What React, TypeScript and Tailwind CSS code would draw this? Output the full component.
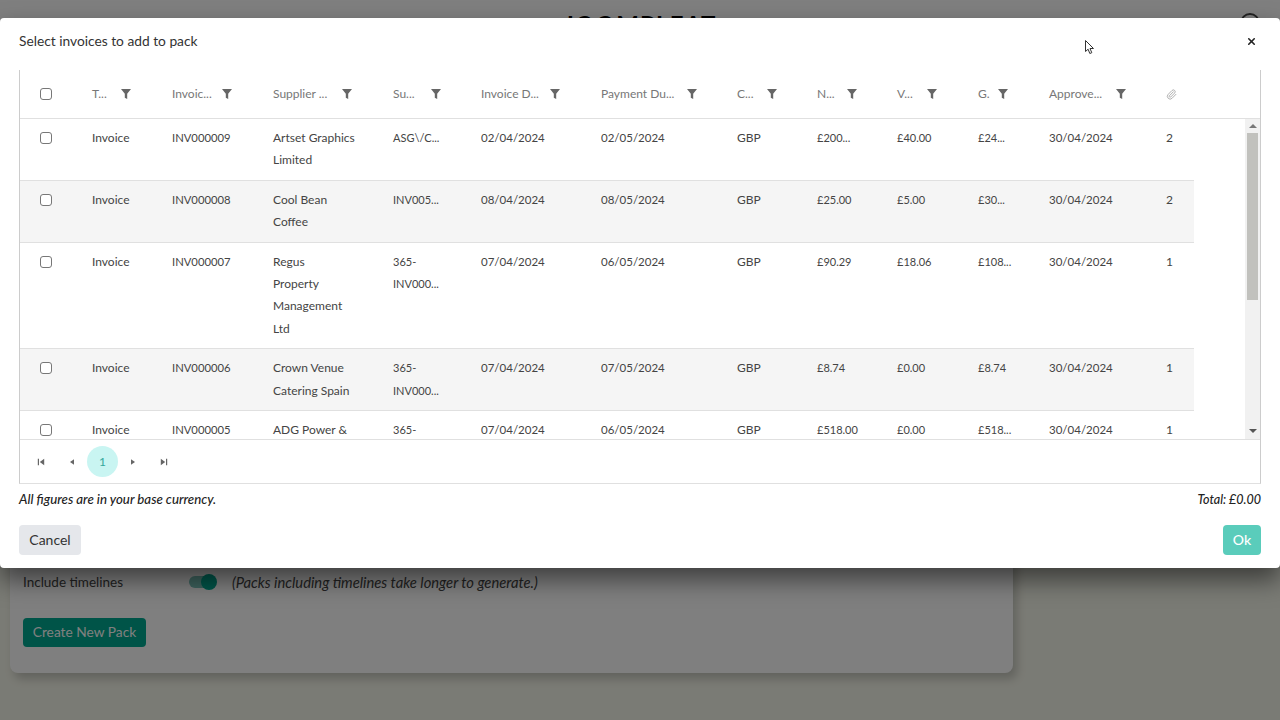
import React from 'react';
import { Paperclip, X } from 'lucide-react';

const columns = 'grid grid-cols-[60px_80px_101px_120px_88px_120px_136px_80px_80px_81px_71px_117px_40px]';

const headers = [
  { label: 'T...', filter: 33 },
  { label: 'Invoic...', filter: 54 },
  { label: 'Supplier ...', filter: 73 },
  { label: 'Su...', filter: 42 },
  { label: 'Invoice D...', filter: 73 },
  { label: 'Payment Du...', filter: 90 },
  { label: 'C...', filter: 34 },
  { label: 'N...', filter: 34 },
  { label: 'V...', filter: 34 },
  { label: 'G.', filter: 24 },
  { label: 'Approve...', filter: 71 },
];

const cellSizes = [
  'text-[11.25px]',
  'text-[12px]',
  'text-[11px]',
  'text-[11.5px]',
  'text-[11.5px]',
  'text-[12px]',
  'text-[11px]',
  'text-[11px]',
  'text-[11px]',
  'text-[11.5px]',
  'text-[12px]',
];

const rows = [
  ['INV000009', 'Artset Graphics\nLimited', 'ASG\\/C...', '02/04/2024', '02/05/2024', 'GBP', '£200...', '£40.00', '£24...', '30/04/2024', '2'],
  ['INV000008', 'Cool Bean\nCoffee', 'INV005...', '08/04/2024', '08/05/2024', 'GBP', '£25.00', '£5.00', '£30...', '30/04/2024', '2'],
  ['INV000007', 'Regus\nProperty\nManagement\nLtd', '365-\nINV000...', '07/04/2024', '06/05/2024', 'GBP', '£90.29', '£18.06', '£108...', '30/04/2024', '1'],
  ['INV000006', 'Crown Venue\nCatering Spain', '365-\nINV000...', '07/04/2024', '07/05/2024', 'GBP', '£8.74', '£0.00', '£8.74', '30/04/2024', '1'],
  ['INV000005', 'ADG Power &', '365-', '07/04/2024', '06/05/2024', 'GBP', '£518.00', '£0.00', '£518...', '30/04/2024', '1'],
];

function Funnel({ left }: { left: number }) {
  return (
    <svg viewBox="0 0 10 12" className="absolute top-0 bottom-0 my-auto h-3 w-2.5 fill-[#666]" style={{ left }}>
      <path d="M0 1h10L6.2 5.8V11L3.8 9.8V5.8z" />
    </svg>
  );
}

function Checkbox() {
  return <div className="h-3 w-3 rounded-[3px] border-[1.5px] border-[#777] bg-white" />;
}

function PagerIcon({ d }: { d: string }) {
  return (
    <svg viewBox="0 0 10 10" className="h-2 w-2 fill-[#666]">
      <path d={d} />
    </svg>
  );
}

export default function App() {
  return (
    <div className="relative h-screen w-full overflow-hidden bg-[#f5f6ea] font-[Lato,sans-serif]">
      {/* page behind the dialog */}
      <div className="flex h-[60px] items-start justify-between bg-white pt-[13px]">
        <div className="w-10" />
        <div className="text-2xl leading-6 font-bold tracking-wider text-black">JOOMPLEAT</div>
        <div className="mr-5 h-5 w-5 rounded-full border-2 border-[#444]" />
      </div>
      <div className="ml-2.5 flex h-[613px] w-[1003px] flex-col justify-end rounded-lg bg-white pb-[26px] pl-[13px] shadow-[4px_6px_10px_rgba(0,0,0,0.2)]">
        <div className="mb-[25px] flex items-center text-[13.5px] text-[#444]">
          <span className="w-[166px]">Include timelines</span>
          <div className="relative h-3 w-6 rounded-full bg-[#7cc4bb]">
            <div className="absolute -top-0.5 -right-1 h-4 w-4 rounded-full bg-[#00a890]" />
          </div>
          <span className="ml-[19px] text-[14.75px] italic">(Packs including timelines take longer to generate.)</span>
        </div>
        <button className="h-[29px] w-[123px] rounded bg-[#00a890] text-[13.75px] text-white">Create New Pack</button>
      </div>

      <div className="absolute inset-0 bg-black/50" />

      {/* dialog */}
      <div className="absolute top-[18px] left-0 flex h-[550px] w-full flex-col rounded bg-white px-[19px] shadow-[0_12px_24px_rgba(0,0,0,0.5)]">
        <div className="flex h-[52px] shrink-0 items-center justify-between pb-[5px]">
          <span className="text-[13.75px] text-[#333]">Select invoices to add to pack</span>
          <X size={11} strokeWidth={3.5} className="mr-[4px] text-[#222]" />
        </div>

        <div className="border-x border-b border-x-[#ccc] border-b-[#e0e0e0]">
          <div className={`${columns} h-[49px] items-center border-b border-[#e0e0e0] text-xs text-[#777]`}>
            <div className="pl-[20px]">
              <Checkbox />
            </div>
            {headers.map((h) => (
              <div key={h.label} className="relative h-full pl-3 leading-[48px]">
                {h.label}
                <Funnel left={h.filter + 8} />
              </div>
            ))}
            <div className="pl-3">
              <Paperclip size={11} className="text-[#aaa]" />
            </div>
          </div>

          <div className="relative h-[321px] overflow-hidden border-b border-[#e0e0e0]">
            <div className="w-[1174px]">
              {rows.map((row, i) => (
                <div
                  key={row[0]}
                  className={`${columns} border-b border-[#e0e0e0] pt-2 pb-2 text-xs leading-[22.4px] text-[#444] ${i % 2 === 1 ? 'bg-[#f5f5f5]' : 'bg-white'}`}
                >
                  <div className="pt-[5px] pl-[20px]">
                    <Checkbox />
                  </div>
                  <div className="pl-3">Invoice</div>
                  {row.map((cell, j) => (
                    <div key={j} className={`pl-3 whitespace-pre-line ${cellSizes[j]}`}>
                      {cell}
                    </div>
                  ))}
                </div>
              ))}
            </div>
            {/* scrollbar */}
            <div className="absolute top-0 right-0 bottom-0 flex w-[15px] flex-col items-center bg-[#f1f1f1]">
              <svg viewBox="0 0 8 4" className="mt-[5px] h-1 w-2 fill-[#777]">
                <path d="M4 0l4 4H0z" />
              </svg>
              <div className="mt-[5px] h-[167px] w-[11px] bg-[#c1c1bd]" />
              <svg viewBox="0 0 8 4" className="mt-auto mb-[6px] h-1 w-2 fill-[#555]">
                <path d="M0 0h8L4 4z" />
              </svg>
            </div>
          </div>

          <div className="flex h-[43px] items-center pl-[15px] text-xs">
            <div className="flex w-[11px] justify-center"><PagerIcon d="M1 1h1.5v8H1zM9 1v8L3.5 5z" /></div>
            <div className="ml-5 flex w-[11px] justify-center"><PagerIcon d="M7.5 1.5v7L2.5 5z" /></div>
            <div className="ml-2.5 flex h-[31px] w-[31px] items-center justify-center rounded-full bg-[#c9f5f2] text-[#35a89c]">1</div>
            <div className="ml-[9px] flex w-[11px] justify-center"><PagerIcon d="M2.5 1.5v7L7.5 5z" /></div>
            <div className="ml-5 flex w-[11px] justify-center"><PagerIcon d="M9 1H7.5v8H9zM1 1v8l5.5-4z" /></div>
          </div>
        </div>

        <div className="mt-2 flex justify-between text-[13.25px] leading-[15px] font-medium text-[#222] italic">
          <span>All figures are in your base currency.</span>
          <span className="text-[12.5px]">Total: £0.00</span>
        </div>

        <div className="mt-[18px] flex justify-between text-sm">
          <button className="h-[30px] w-[62px] rounded bg-[#e5e7eb] text-[#333]">Cancel</button>
          <button className="h-[30px] w-[38px] rounded bg-[#5accbb] font-medium text-white">Ok</button>
        </div>
      </div>

      {/* mouse pointer */}
      <svg viewBox="0 0 10 15" className="absolute top-[40px] left-[1085px] h-[15px] w-2.5 fill-white stroke-[#333]">
        <path d="M.5.5v11l2.6-2.3 1.7 4.3 2-.8-1.8-4.2h3.5z" />
      </svg>
    </div>
  );
}
